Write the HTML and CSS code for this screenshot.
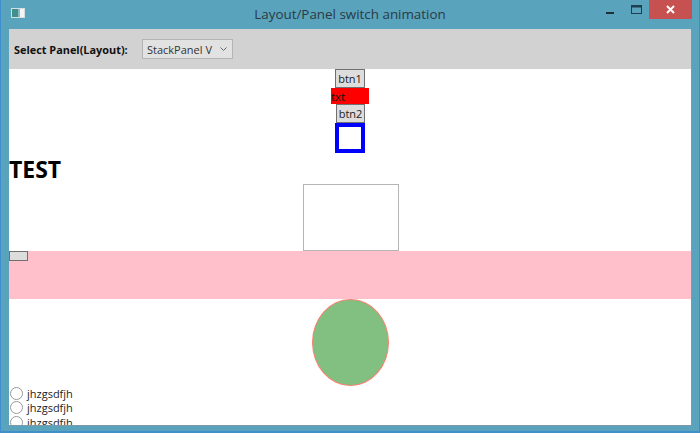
FILE: index.html
```html
<!DOCTYPE html>
<html lang="en">
<head>
    <meta charset="UTF-8">
    <title>Layout/Panel switch animation</title>
    <link rel="stylesheet" href="styles.css">
</head>
<body>

    <div class="window">
        <!-- TITLE BAR -->
        <div class="titlebar">
            <svg class="app-icon" width="14" height="10" viewBox="0 0 14 10">
                <rect x="0" y="0" width="14" height="10" fill="#d5dfe2"/>
                <rect x="1" y="1" width="6" height="8" fill="#3f8f8f"/>
                <rect x="7" y="1" width="2" height="8" fill="#8fb9c0"/>
                <rect x="9" y="1" width="4" height="8" fill="#f4f6f6"/>
            </svg>
            <div class="title">Layout/Panel switch animation</div>
            <div class="win-buttons">
                <svg class="btn-min" width="8" height="2" viewBox="0 0 8 2">
                    <rect width="8" height="2" fill="#1f2f38"/>
                </svg>
                <svg class="btn-max" width="11" height="9" viewBox="0 0 11 9">
                    <rect x="0.5" y="0.5" width="10" height="8" fill="none" stroke="#1f3f50"/>
                    <rect x="0" y="0" width="11" height="2.5" fill="#1f3f50"/>
                </svg>
                <div class="btn-close">
                    <svg width="9" height="9" viewBox="0 0 9 9">
                        <path d="M1 1 L8 8 M8 1 L1 8" stroke="#fff" stroke-width="2"/>
                    </svg>
                </div>
            </div>
        </div>

        <!-- CLIENT AREA -->
        <div class="client">
            <div class="toolbar">
                <span class="toolbar-label">Select Panel(Layout):</span>
                <div class="combo">
                    <span>StackPanel V</span>
                    <svg width="7" height="4" viewBox="0 0 7 4">
                        <path d="M0.5 0.5 L3.5 3.5 L6.5 0.5" fill="none" stroke="#666" stroke-width="1"/>
                    </svg>
                </div>
            </div>

            <div class="stack">
                <div class="wpf-btn btn1">btn1</div>
                <div class="txt">txt</div>
                <div class="wpf-btn btn2">btn2</div>
                <div class="blue-box"></div>
                <div class="test">TEST</div>
                <div class="white-box"></div>
                <div class="pink">
                    <div class="small-btn"></div>
                </div>
                <div class="ellipse"></div>
                <div class="radio"><span class="dot"></span>jhzgsdfjh</div>
                <div class="radio"><span class="dot"></span>jhzgsdfjh</div>
                <div class="radio"><span class="dot"></span>jhzgsdfjh</div>
            </div>
        </div>
    </div>

</body>
</html>
```

FILE: styles.css
```css
html, body {
    margin: 0;
    height: 100%;
    background: #fff;
    overflow: hidden;
}

.window {
    width: 700px;
    height: 433px;
    box-sizing: border-box;
    background: #5aa3bd;
    border-left: 1px solid #3d8fd0;
    border-right: 1px solid #3f8fb0;
    border-bottom: 2px solid #3f8fc8;
    padding: 0 8px 6px 8px;
    display: flex;
    flex-direction: column;
    font-family: "Open Sans", sans-serif;
}

/* TITLE BAR */
.titlebar {
    height: 29px;
    flex: none;
    display: flex;
    align-items: flex-start;
    position: relative;
    margin: 0 -8px;
}

.app-icon {
    margin: 8px 0 0 10px;
}

.title {
    position: absolute;
    left: 0;
    right: 0;
    top: 5px;
    text-align: center;
    font-size: 13.4px;
    line-height: 18px;
    color: #2a3a44;
}

.win-buttons {
    margin-left: auto;
    display: flex;
    align-items: flex-start;
}

.btn-min {
    margin: 12px 17px 0 0;
}

.btn-max {
    margin: 5px 7px 0 0;
}

.btn-close {
    width: 43px;
    height: 19px;
    margin-right: 7px;
    background: #c75050;
    display: flex;
    align-items: center;
    justify-content: center;
}

/* CLIENT */
.client {
    flex: 1;
    background: #fff;
    overflow: hidden;
    box-shadow: 1px 1px 0 #7f9aa5;
}

.toolbar {
    height: 40px;
    background: #d1d2d1;
    display: flex;
    align-items: center;
    padding-left: 5px;
}

.toolbar-label {
    font-size: 10.9px;
    font-weight: 700;
    color: #111;
    width: 128px;
}

.combo {
    width: 91px;
    height: 20px;
    box-sizing: border-box;
    border: 1px solid #b4b4b4;
    background: #e2e2e2;
    display: flex;
    align-items: center;
    justify-content: space-between;
    padding: 0 5px 0 4px;
    font-size: 11px;
    color: #333;
}

/* STACK */
.stack {
    display: flex;
    flex-direction: column;
    align-items: center;
}

.wpf-btn {
    height: 19px;
    box-sizing: border-box;
    border: 1px solid #707070;
    background: #dddddd;
    font-size: 11px;
    line-height: 17px;
    text-align: center;
    color: #222;
}

.btn1 {
    width: 30px;
}

.btn2 {
    width: 29px;
    margin-left: 1px;
}

.txt {
    width: 38px;
    height: 16px;
    background: #ff0000;
    font-size: 11.5px;
    line-height: 17px;
    color: #111;
}

.blue-box {
    width: 30px;
    height: 30px;
    box-sizing: border-box;
    border: 4px solid #0000ff;
}

.test {
    align-self: flex-start;
    height: 31px;
    font-size: 23px;
    font-weight: 700;
    line-height: 33px;
    color: #000;
}

.white-box {
    width: 96px;
    height: 67px;
    margin-left: 1px;
    box-sizing: border-box;
    border: 1px solid #b5b5b5;
    background: #fff;
}

.pink {
    align-self: stretch;
    height: 48px;
    background: #ffc0cb;
}

.small-btn {
    width: 19px;
    height: 10px;
    box-sizing: border-box;
    border: 1px solid #707070;
    background: #dddddd;
}

.ellipse {
    width: 77px;
    height: 87px;
    box-sizing: border-box;
    border: 1px solid #fa8072;
    border-radius: 50%;
    background: #81c080;
}

.radio {
    align-self: flex-start;
    height: 14.5px;
    flex: none;
    display: flex;
    align-items: center;
    font-size: 11px;
    color: #222;
}

.dot {
    width: 13px;
    height: 13px;
    box-sizing: border-box;
    border: 1px solid #9a9a9a;
    border-radius: 50%;
    background: #fff;
    margin: 0 4px 0 1px;
}
```
